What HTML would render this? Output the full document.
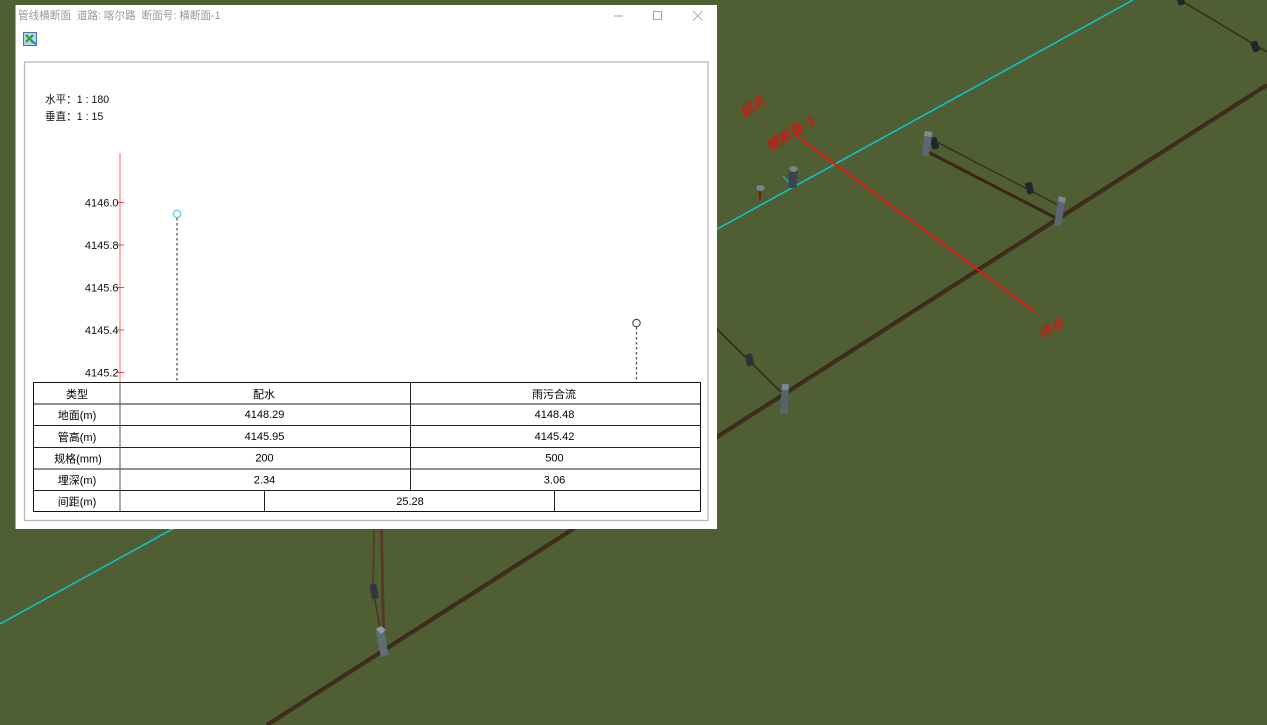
<!DOCTYPE html>
<html lang="zh">
<head>
<meta charset="utf-8">
<title>管线横断面</title>
<style>
html,body{margin:0;padding:0;width:1267px;height:725px;overflow:hidden;background:#4f5f33}
svg{display:block;position:absolute;left:0;top:0;filter:blur(0.3px)}
text{font-family:"Liberation Sans","Noto Sans CJK SC",sans-serif}
.c{font-size:11px;fill:#000;text-anchor:middle}
.a{font-size:11px;fill:#111;text-anchor:end}
.t{font-size:10.6px;fill:#999}
.r{font-size:13px;font-weight:bold;fill:#cc1a14;text-anchor:middle}
</style>
</head>
<body>
<svg width="1267" height="725" viewBox="0 0 1267 725" xmlns="http://www.w3.org/2000/svg">
<rect width="1267" height="725" fill="#4f5f33"/>

<!-- cyan line -->
<line x1="1133" y1="0" x2="0" y2="624" stroke="#0cc8d0" stroke-width="1.500"/>
<line x1="783" y1="176" x2="790" y2="184" stroke="#12b8c0" stroke-width="1.200"/>

<!-- main pipe -->
<line x1="1267" y1="85" x2="267" y2="725" stroke="#382619" stroke-width="4"/>
<line x1="1267" y1="85.500" x2="267" y2="725.500" stroke="#4e3425" stroke-width="1"/>

<!-- top right branch -->
<line x1="1180" y1="0" x2="1267" y2="52" stroke="#35291d" stroke-width="1.500"/>
<rect x="1177.500" y="-4" width="7" height="9" rx="2" fill="#20272a" transform="rotate(-20 1181 1)"/>
<rect x="1251.500" y="41" width="7" height="11" rx="2" fill="#20272a" transform="rotate(-20 1255 46)"/>

<!-- branch with valves -->
<line x1="928" y1="152" x2="1056" y2="218" stroke="#3a2618" stroke-width="3"/>
<line x1="933" y1="140" x2="1058" y2="205" stroke="#35291d" stroke-width="1.300"/>
<rect x="931" y="137" width="7" height="12" rx="2" fill="#20272a" transform="rotate(-15 935 143)"/>
<rect x="1026" y="182" width="7" height="12" rx="2" fill="#20272a" transform="rotate(-15 1030 188)"/>
<polygon points="924.500,132 932.500,132 929,156 922,156" fill="#5a6670"/>
<polygon points="925,131 932.500,132 931.500,137 924,136" fill="#808a92"/>
<polygon points="1058.500,197 1066,198 1061,226 1054,225" fill="#5a6670"/>
<polygon points="1059,196 1066,198 1064.500,203 1058,201" fill="#808a92"/>

<!-- left-middle branch -->
<line x1="717" y1="329" x2="782" y2="393" stroke="#33271c" stroke-width="1.500"/>
<rect x="745.500" y="354" width="7.500" height="12" rx="2" fill="#2d3437" transform="rotate(-15 749 359)"/>
<polygon points="781.500,385 789,385 788,414 780,414" fill="#56636d"/>
<polygon points="782,384 788.500,384 788.500,390 782,390" fill="#7c8790"/>

<!-- lower branch -->
<line x1="381.500" y1="529" x2="383.500" y2="632" stroke="#553a2a" stroke-width="3"/>
<line x1="374" y1="529" x2="373" y2="585" stroke="#553a2a" stroke-width="1.800"/>
<line x1="373" y1="590" x2="380" y2="628" stroke="#4a3427" stroke-width="1.500"/>
<rect x="370.500" y="584" width="7" height="15" rx="2" fill="#303639" transform="rotate(-10 374 591)"/>
<polygon points="375.500,630 384,628 388.500,655 381,657" fill="#5f6c76"/>
<polygon points="376,629 381,626 386,630 381,634" fill="#8f99a0"/>

<!-- small wells -->
<polygon points="789,170 798,170 796.500,188 788.500,188" fill="#3c444e"/>
<ellipse cx="793.500" cy="169" rx="4.300" ry="3" fill="#78848c"/>
<line x1="760" y1="190" x2="760" y2="199" stroke="#7a1a16" stroke-width="2"/>
<ellipse cx="760.500" cy="188" rx="4.300" ry="3" fill="#78848c"/>

<!-- red section line -->
<line x1="797" y1="136" x2="1035" y2="312" stroke="#f01010" stroke-width="1.800"/>
<text class="r" transform="translate(755 110) rotate(-32) skewX(-8)">起点</text>
<text class="r" transform="translate(793 137) rotate(-32) skewX(-8)" textLength="54">横断面-1</text>
<text class="r" transform="translate(1054 332) rotate(-32) skewX(-8)">终点</text>

<!-- window -->
<rect x="15.500" y="5" width="701.500" height="524" fill="#fff"/>
<text class="t" x="18" y="19">管线横断面&#160;&#160;道路: 喀尔路&#160;&#160;断面号: 横断面-1</text>
<line x1="614" y1="16" x2="623" y2="16" stroke="#b0b0b0" stroke-width="1.200"/>
<rect x="653.500" y="11.500" width="8" height="8" fill="none" stroke="#a8a8a8" stroke-width="1.100"/>
<path d="M693 11L702.500 20.500M702.500 11L693 20.500" stroke="#b0b0b0" stroke-width="1" fill="none"/>

<!-- excel icon -->
<rect x="23.500" y="32.500" width="13" height="13" fill="#b9d3ea" stroke="#4d77a6" stroke-width="1"/>
<path d="M26 35L33 42M33 35L26 42" stroke="#2e9a36" stroke-width="2" fill="none"/>
<path d="M31 41L36 44" stroke="#2a7ec8" stroke-width="2" fill="none"/>

<!-- chart frame -->
<rect x="24.500" y="62" width="683.500" height="458.500" fill="#fff" stroke="#b8b8b8" stroke-width="1.300"/>

<text x="45" y="103" font-size="10.6" fill="#111">水平：1 : 180</text>
<text x="45" y="120" font-size="10.6" fill="#111">垂直：1 : 15</text>

<!-- axis -->
<line x1="120" y1="153" x2="120" y2="382" stroke="#f06a6a" stroke-width="1"/>
<g stroke="#e44" stroke-width="1">
<line x1="117" y1="202.500" x2="124" y2="202.500"/>
<line x1="117" y1="245" x2="124" y2="245"/>
<line x1="117" y1="287.500" x2="124" y2="287.500"/>
<line x1="117" y1="330" x2="124" y2="330"/>
<line x1="117" y1="372.500" x2="124" y2="372.500"/>
</g>
<text class="a" x="118.500" y="206.500">4146.0</text>
<text class="a" x="118.500" y="249">4145.8</text>
<text class="a" x="118.500" y="291.500">4145.6</text>
<text class="a" x="118.500" y="334">4145.4</text>
<text class="a" x="118.500" y="376.500">4145.2</text>

<!-- measures -->
<circle cx="177" cy="214" r="3.700" fill="#fff" stroke="#45e0ea" stroke-width="1.300"/>
<line x1="177" y1="218" x2="177" y2="382" stroke="#555" stroke-width="1.300" stroke-dasharray="2.500 2.500"/>
<circle cx="636.500" cy="323" r="3.700" fill="#fff" stroke="#444" stroke-width="1.100"/>
<line x1="636.500" y1="327" x2="636.500" y2="382" stroke="#555" stroke-width="1.300" stroke-dasharray="2.500 2.500"/>

<!-- table -->
<rect x="33.500" y="382.500" width="667" height="129" fill="#fff" stroke="#111" stroke-width="1"/>
<g stroke="#222" stroke-width="1">
<line x1="33" y1="404" x2="700" y2="404"/>
<line x1="33" y1="425.500" x2="700" y2="425.500"/>
<line x1="33" y1="447.500" x2="700" y2="447.500"/>
<line x1="33" y1="469" x2="700" y2="469"/>
<line x1="33" y1="490.500" x2="700" y2="490.500"/>
<line x1="120" y1="382" x2="120" y2="511" stroke="#555"/>
<line x1="410.500" y1="382" x2="410.500" y2="490"/>
<line x1="264.500" y1="490" x2="264.500" y2="511"/>
<line x1="554.500" y1="490" x2="554.500" y2="511"/>
</g>
<text class="c" x="77" y="398">类型</text>
<text class="c" x="264" y="398">配水</text>
<text class="c" x="554" y="398">雨污合流</text>
<text class="c" x="77" y="419">地面(m)</text>
<text class="c" x="264.500" y="418">4148.29</text>
<text class="c" x="554.500" y="418">4148.48</text>
<text class="c" x="77" y="441">管高(m)</text>
<text class="c" x="264.500" y="440">4145.95</text>
<text class="c" x="554.500" y="440">4145.42</text>
<text class="c" x="78" y="462.500">规格(mm)</text>
<text class="c" x="264.500" y="461.500">200</text>
<text class="c" x="554.500" y="461.500">500</text>
<text class="c" x="77" y="484">埋深(m)</text>
<text class="c" x="264.500" y="483.500">2.34</text>
<text class="c" x="554.500" y="483.500">3.06</text>
<text class="c" x="77" y="505.500">间距(m)</text>
<text class="c" x="410" y="505">25.28</text>
</svg>
</body>
</html>
